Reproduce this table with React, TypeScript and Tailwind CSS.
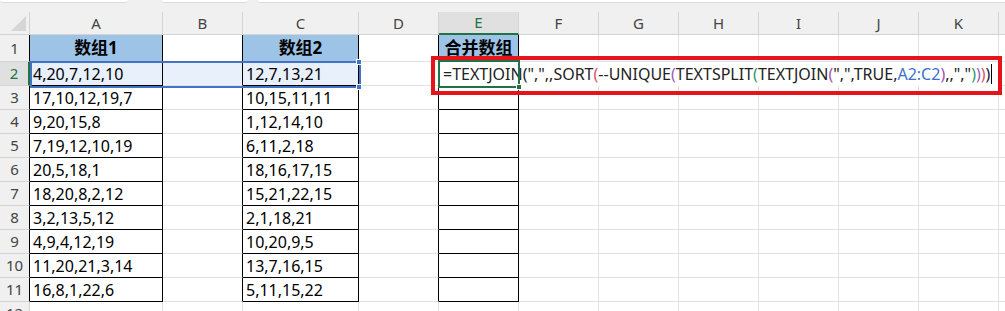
import React from "react";

const A = ["4,20,7,12,10", "17,10,12,19,7", "9,20,15,8", "7,19,12,10,19", "20,5,18,1", "18,20,8,2,12", "3,2,13,5,12", "4,9,4,12,19", "11,20,21,3,14", "16,8,1,22,6"];
const C = ["12,7,13,21", "10,15,11,11", "1,12,14,10", "6,11,2,18", "18,16,17,15", "15,21,22,15", "2,1,18,21", "10,20,9,5", "13,7,16,15", "5,11,15,22"];
const LETTERS = ["A", "B", "C", "D", "E", "F", "G", "H", "I", "J", "K", ""];

const FONT = { fontFamily: '"Noto Sans", "Noto Sans CJK SC", sans-serif' };

function Formula() {
  const k = "text-[#222]";
  const p1 = "text-[#e0506a]";
  const p2 = "text-[#9a5cc0]";
  const p3 = "text-[#2f9a6c]";
  const p4 = "text-[#a64fb0]";
  const ref = "text-[#3b6fd0]";
  return (
    <span className="whitespace-nowrap">
      <span className={k}>=TEXTJOIN(",",,SORT</span>
      <span className={p1}>(</span>
      <span className={k}>--UNIQUE</span>
      <span className={p2}>(</span>
      <span className={k}>TEXTSPLIT</span>
      <span className={p3}>(</span>
      <span className={k}>TEXTJOIN</span>
      <span className={p4}>(</span>
      <span className={k}>",",TRUE,</span>
      <span className={ref}>A2:C2</span>
      <span className={p4}>)</span>
      <span className={k}>,,","</span>
      <span className={p3}>)</span>
      <span className={p2}>)</span>
      <span className={p1}>)</span>
      <span className={k}>)</span>
    </span>
  );
}

export default function App() {
  const rows = Array.from({ length: 12 }, (_, i) => i + 1);
  return (
    <div className="w-[1005px] h-[311px] overflow-hidden bg-white" style={FONT}>
      {/* top strip: bottoms of formula bar boxes */}
      <div className="h-[12px] bg-[#f0f0f0] flex items-start gap-[10px]">
        <div className="w-[128px] h-[3px] bg-white rounded-b-[3px] border-b border-[#dcdcdc]" />
        <div className="ml-[24px] w-[86px] h-[3px] bg-white rounded-b-[3px] border-b border-[#dcdcdc]" />
        <div className="flex-1 h-[3px] bg-white rounded-bl-[3px] border-b border-[#dcdcdc]" />
      </div>

      <div className="relative grid grid-cols-[30px_133px_80px_116px_80px_80px_80px_80px_80px_80px_80px_80px_80px] grid-rows-[23px_27px_repeat(11,24px)]">
        {/* header row */}
        <div className="bg-[#f0f0f0] border-r border-b border-[#d4d4d4] flex items-end justify-end p-[3px]">
          <div className="w-0 h-0 border-l-[15px] border-l-transparent border-b-[15px] border-b-[#d6d6d6]" />
        </div>
        {LETTERS.map((l, i) =>
          l === "E" ? (
            <div key={i} className="bg-[#e0e0e0] border-r border-[#d4d4d4] border-b-2 border-b-[#217346] flex items-center justify-center text-[15px] text-[#217346]">
              {l}
            </div>
          ) : (
            <div key={i} className="bg-[#f0f0f0] border-r border-b border-[#d4d4d4] flex items-center justify-center text-[15px] text-[#444]">
              {l}
            </div>
          )
        )}

        {rows.map((r) => {
          const framed = r <= 11;
          const isHead = r === 1;
          const sel = r === 2;
          const headerCls = sel
            ? "bg-[#e0e0e0] border-r-2 border-r-[#217346] border-b border-b-[#d4d4d4] text-[#217346]"
            : `bg-[#f0f0f0] border-b border-b-[#d4d4d4] border-r ${framed ? "border-r-black" : "border-r-[#d4d4d4]"} text-[#444]`;
          const boxCls = framed ? "border-r border-b border-black" : "border-r border-b border-[#e1e1e1]";
          const leftOfBox = framed ? "border-r border-r-black border-b border-b-[#e1e1e1]" : "border-r border-b border-[#e1e1e1]";
          const plain = "border-r border-b border-[#e1e1e1]";
          const blueFill = isHead ? "bg-[#9dc3e6]" : sel ? "bg-[#e8f0fb]" : "bg-white";
          const dataCls = isHead
            ? "flex items-center justify-center text-[17px] font-bold text-black"
            : "flex items-center pl-[3px] text-[16px] text-black";
          return (
            <React.Fragment key={r}>
              <div className={`${headerCls} flex items-center justify-center text-[15px]`}>{r}</div>
              {/* A */}
              <div className={`${boxCls} ${blueFill} ${dataCls}`}>{isHead ? "数组1" : r <= 11 ? A[r - 2] : ""}</div>
              {/* B */}
              <div className={`${leftOfBox} ${sel ? "bg-[#e8f0fb]" : ""}`} />
              {/* C */}
              <div className={`${boxCls} ${blueFill} ${dataCls}`}>{isHead ? "数组2" : r <= 11 ? C[r - 2] : ""}</div>
              {/* D */}
              <div className={leftOfBox} />
              {/* E */}
              <div className={`${boxCls} ${isHead ? "bg-[#9dc3e6]" : ""} ${dataCls}`}>{isHead ? "合并数组" : ""}</div>
              {/* F..L */}
              {Array.from({ length: 7 }, (_, i) => (
                <div key={i} className={plain} />
              ))}
            </React.Fragment>
          );
        })}

        {/* range highlight A2:C2 */}
        <div className="absolute left-[30px] top-[49px] w-[331px] h-[27px] border-2 border-[#4472c4]" />
        <div className="absolute left-[356px] top-[47px] w-[6px] h-[6px] bg-[#4472c4] border border-white" />
        <div className="absolute left-[356px] top-[72px] w-[6px] h-[6px] bg-[#4472c4] border border-white" />

        {/* editing overflow area */}
        <div className="absolute left-[440px] top-[50px] w-[558px] h-[24px] bg-white flex items-center pl-[3px] text-[16px]">
          <Formula />
          <span className="inline-block w-[1px] h-[20px] bg-black ml-[1px]" />
        </div>
        {/* active cell E2 */}
        <div className="absolute left-[438px] top-[48px] w-[82px] h-[28px] border-2 border-[#217346]" />
        <div className="absolute left-[516px] top-[72px] w-[6px] h-[6px] bg-[#217346] border border-white" />

        {/* red annotation box */}
        <div className="absolute left-[431px] top-[44px] w-[571px] h-[39px] border-4 border-[#e5141b]" />
      </div>
    </div>
  );
}
